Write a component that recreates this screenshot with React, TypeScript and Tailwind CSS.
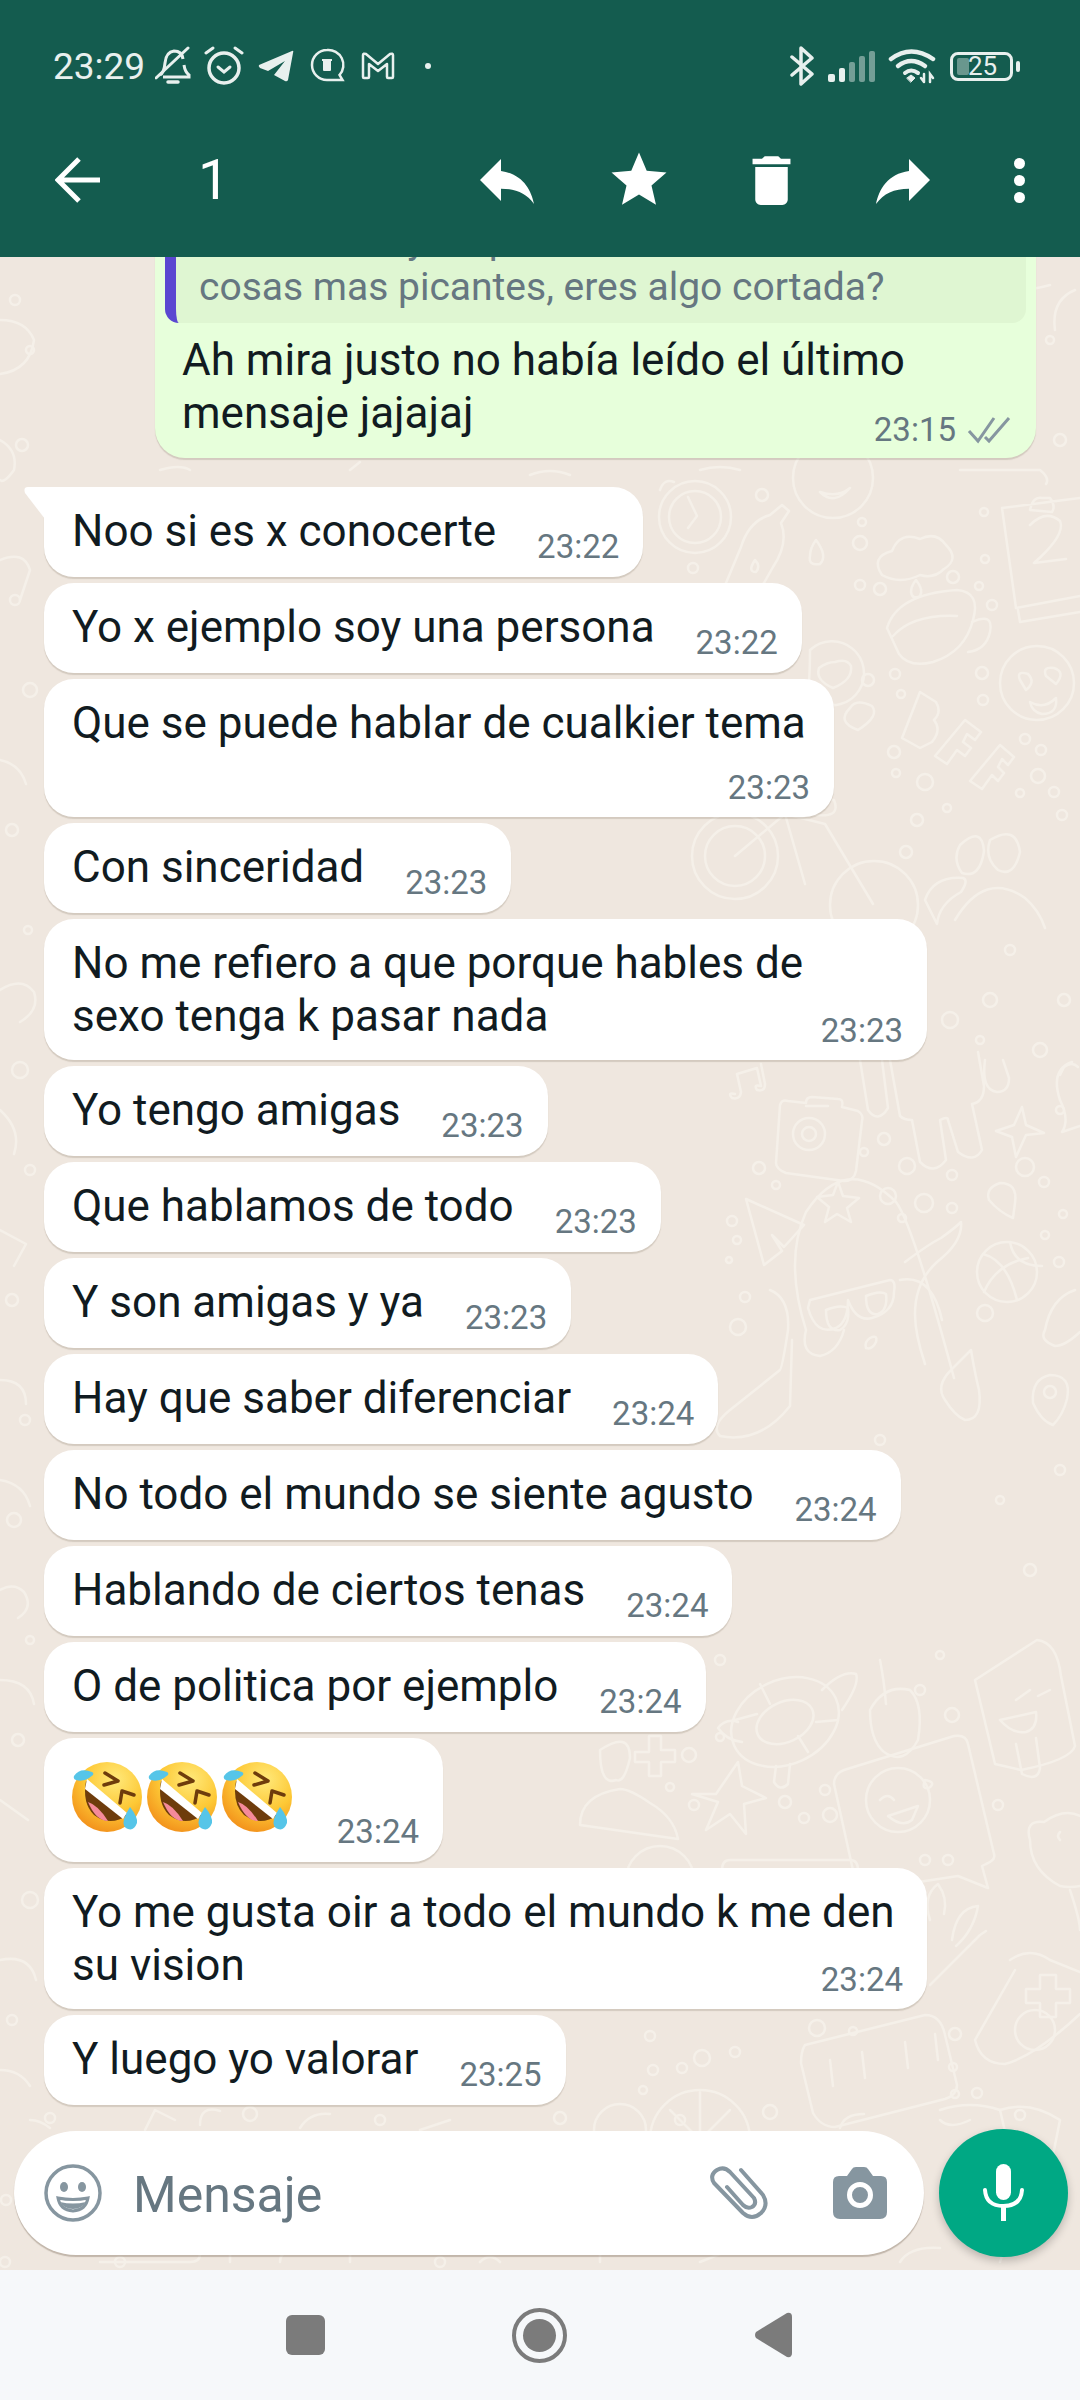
import type { ReactNode } from 'react';

const ink = 'text-[44px] leading-[53px] text-[#111b21]';
const stamp = 'text-[33px] leading-[40px] text-[#667781] whitespace-nowrap';

function Tail() {
  return (
    <svg className="absolute left-[-21px] top-0" width="42" height="32" viewBox="0 0 42 32">
      <path d="M5 0H42V32H22L2 6Q0 0 5 0Z" fill="#fff" />
    </svg>
  );
}

function Bubble({ text, time, tail }: { text: string; time: string; tail?: boolean }) {
  return (
    <div className={`relative self-start shrink-0 flex items-end bg-white pl-[28px] pr-[24px] shadow-[0_2px_1px_rgba(90,70,50,0.18)] rounded-[30px] ${tail ? 'rounded-tl-none' : ''}`}>
      {tail && <Tail />}
      <p className={`${ink} pt-[18px] pb-[19px] whitespace-nowrap`}>{text}</p>
      <span className={`${stamp} ml-[41px] mb-[10px]`}>{time}</span>
    </div>
  );
}

function WideBubble({ text, time, width, timeClass }: { text: ReactNode; time: string; width: string; timeClass: string }) {
  return (
    <div className={`self-start shrink-0 bg-white pl-[28px] pr-[24px] pt-[18px] pb-[9px] shadow-[0_2px_1px_rgba(90,70,50,0.18)] rounded-[30px] ${width}`}>
      <p className={ink}>{text}</p>
      <p className={`${stamp} text-right ${timeClass}`}>{time}</p>
    </div>
  );
}

function Laugh() {
  return (
    <svg width="75" height="76" viewBox="0 0 75 76">
      <defs>
        <radialGradient id="lf" cx="0.62" cy="0.25" r="0.8">
          <stop offset="0" stopColor="#ffe97a" />
          <stop offset="0.55" stopColor="#fdc835" />
          <stop offset="1" stopColor="#f28f1a" />
        </radialGradient>
      </defs>
      <circle cx="35" cy="38" r="35" fill="url(#lf)" />
      <path d="M14 22 L56 56 Q38 68 22 56 Q10 44 14 22Z" fill="#6e3c0c" />
      <path d="M15 20 L55 54 L51 60 L13 30Z" fill="#fff" />
      <path d="M16 43 Q26 46 36 62 Q24 62 16 43Z" fill="#f58a9a" />
      <path d="M33 14 L46 22 L32 26" fill="none" stroke="#6e3c0c" strokeWidth="3.5" strokeLinecap="round" strokeLinejoin="round" />
      <path d="M48 44 L50 32 L62 36" fill="none" stroke="#6e3c0c" strokeWidth="3.5" strokeLinecap="round" strokeLinejoin="round" />
      <path d="M2 17 Q8 8 20 13 Q22 14 21 16 Q12 24 4 21 Q1 20 2 17Z" fill="#56c5e8" />
      <path d="M58 48 Q66 58 65 64 Q62 72 56 70 Q50 68 52 60 Q54 54 58 48Z" fill="#56c5e8" />
    </svg>
  );
}

// doodle dots, in page coordinates
const dots: number[][] = [
  [762, 495, 6], [862, 522, 4], [860, 543, 7], [984, 512, 4], [693, 568, 5], [860, 585, 5], [880, 589, 6], [953, 577, 6], [985, 559, 4], [979, 586, 4], [992, 605, 5],
  [868, 680, 6], [895, 674, 5], [901, 694, 4], [982, 673, 6], [983, 700, 5], [1025, 739, 5], [1041, 750, 5], [894, 752, 6], [896, 773, 4], [925, 782, 8], [1038, 776, 7], [1020, 793, 4], [1054, 792, 5], [947, 808, 4], [917, 820, 6], [906, 852, 6], [1062, 815, 5],
  [759, 1168, 6], [776, 1185, 4], [884, 1139, 6], [864, 1152, 4], [907, 1166, 8], [888, 1196, 8], [924, 1203, 9], [952, 1175, 5], [952, 1208, 5], [902, 1218, 4], [1025, 1167, 9], [1044, 1182, 5], [1063, 1214, 4], [1045, 1235, 4], [1059, 1262, 5], [732, 1221, 5], [737, 1240, 4], [729, 1260, 3], [745, 1297, 5], [738, 1327, 8], [985, 1313, 8],
  [640, 1660, 5], [690, 1660, 6], [720, 1660, 5], [940, 1655, 4], [920, 1690, 5], [952, 1715, 7], [720, 1737, 4], [689, 1755, 7], [670, 1787, 4], [694, 1805, 5], [825, 1790, 5], [785, 1802, 6], [804, 1818, 5], [830, 1815, 7], [998, 1805, 5], [925, 1860, 5], [948, 1860, 5],
  [650, 2036, 5], [653, 2070, 5], [682, 2068, 5], [702, 2058, 8], [735, 2052, 5], [817, 2028, 8], [853, 2031, 4], [955, 2034, 6], [953, 2067, 4], [955, 2094, 4], [977, 2093, 5], [643, 2090, 4], [1020, 2115, 5],
  [15, 300, 5], [30, 350, 4], [22, 445, 6], [15, 600, 5], [30, 690, 7], [12, 830, 6], [28, 930, 4], [20, 1070, 8], [30, 1170, 5], [12, 1300, 6], [25, 1420, 5], [14, 1520, 7], [30, 1640, 4], [18, 1740, 6], [30, 1900, 8], [12, 2020, 5], [50, 2118, 5], [250, 2114, 7], [380, 2120, 5], [560, 2118, 6], [770, 2112, 7], [6, 2200, 5], [5, 2262, 5], [120, 2262, 5], [440, 2262, 5], [680, 2120, 5],
  [1050, 340, 4], [1060, 440, 6], [1064, 1000, 6], [990, 1000, 7], [1010, 950, 5], [980, 1040, 4], [1040, 1050, 7], [1060, 1110, 4], [770, 1020, 5], [950, 1020, 8], [880, 1440, 5], [760, 1470, 7], [1060, 1470, 5], [1000, 1500, 4], [1030, 1570, 6],
];

function Wallpaper() {
  return (
    <svg className="absolute inset-0 w-full h-full" viewBox="0 257 1080 2013" preserveAspectRatio="none">
      <g fill="none" stroke="#f5f0e9" strokeWidth="2.5" strokeLinecap="round" strokeLinejoin="round">
        {dots.map(([x, y, r]) => (
          <circle key={`${x}-${y}`} cx={x} cy={y} r={r} />
        ))}
        {/* clock */}
        <circle cx="695" cy="517" r="36" />
        <circle cx="695" cy="517" r="26" />
        <path d="M688 497L697 516L688 528M660 490q4-12 14-8" />
        {/* smiley top */}
        <circle cx="833" cy="478" r="40" />
        <path d="M820 492q14 14 30-4Q838 498 820 492Z" />
        {/* spray bottle */}
        <path d="M770 515l12-10l7 6l-8 12q8 20-8 44l-34 60q-10 8-28-8l30-72q8-26 29-32ZM755 560q6 6 1 12q-9 0-1-12Z" />
        {/* cloud, drops */}
        <path d="M882 575q-12-18 10-24q8-20 28-12q16-8 26 6q14 14-2 24q-10 10-24 6q-20 10-38 0Z" />
        <path d="M816 540q12 16 4 24q-12 2-10-8q0-8 6-16ZM916 580q8 10 4 16q-8 4-9-4q0-6 5-12Z" />
        {/* 24 calendar */}
        <path d="M1002 508l62-8l16-2M1002 508l14 100l64-12M1030 510q3-14 12-12h8q6 8 2 14ZM1018 610l2 12l60-10" />
        <path d="M1030 525q16-16 30-4q6 14-26 42l32-4" />
        {/* cup */}
        <path d="M887 628q10-34 70-38q24 2 16 30q-8 32-40 42q-24 6-34-8ZM893 636q20-22 64-20M972 622q22-10 18 10q-4 18-22 20" />
        {/* heart smiley */}
        <circle cx="1037" cy="683" r="37" />
        <path d="M1020 680q-4-10 8-6q8 8-2 16ZM1046 676q-4-10 8-8q12 4 2 16ZM1030 702q14 8 26-4q2 16-14 16q-10-2-12-12Z" />
        {/* speech + heart */}
        <path d="M810 650a32 32 0 1 1 8 52l-14 4q6-10 6-56ZM835 662q12-4 16 4q2 14-18 22q-18-8-14-20q8-6 16-6Z" />
        <path d="M850 708q6-10 22-2q8 10-14 24q-22-8-8-22Z" />
        {/* BFF */}
        <path d="M920 692l16 10q6 10-2 18q8 10-2 22l-12 6l-18-10ZM965 720l16 12l-6 8l-8-6l-4 8l8 6l-6 8l-8-6l-10 14l-12-8Z" />
        <path d="M1000 745l14 12l-6 8l-6-6l-4 8l6 6l-6 8l-6-6l-10 14l-12-8Z" />
        {/* bike */}
        <circle cx="735" cy="856" r="43" />
        <circle cx="735" cy="856" r="30" />
        <circle cx="874" cy="905" r="44" />
        <path d="M735 856l50-42l40 10l48 80M790 800h44q8 20-24 14M785 814l20 70" />
        {/* people */}
        <path d="M960 845q22-20 24 6q-4 28-22 22q-10-14-2-28ZM990 840q26-16 30 12q-6 26-22 18q-14-12-8-30ZM925 900q8-24 38-22q6 2-2 14q-22 12-24 32ZM955 920q30-50 70-22q14 12 20 30" />
        {/* music, camera */}
        <path d="M735 1094q-8-2-3 4q8 2 9-6l-4-18l20-6l4 18q-8-2-4 4q8 2 8-6l-4-20" />
        <path d="M780 1105q2-6 8-4l18 2q0-6 6-6l26 2q6 0 4 8l16 4q6 4 4 10l-6 50q-2 10-12 10l-58-8q-10-4-10-10ZM806 1106h22" />
        <circle cx="809" cy="1134" r="16" />
        <circle cx="809" cy="1134" r="7" />
        {/* drips */}
        <path d="M860 1060l8 50q10 14 20-2l-6-48M890 1060l10 56q4 4 12 4l8 42q14 14 26-2l-6-40q8-4 8 0l10 32q16 12 24-2l-10-46q12-2 12-18l-6-34M985 1060q-4 30 12 32q12 0 12-14l-6-18" />
        <path d="M1022 1107l-8 18l-18 6l16 6l4 20l10-22l18-2l-18-8Z" />
        <path d="M1060 1100q-10-30 12-38M1060 1100q10 20 2 32l18-6" />
        {/* star, pin, plane */}
        <path d="M838 1182l5 14l16 2l-12 10l4 14l-14-8l-12 8l4-15l-12-10l16-2Z" />
        <path d="M1000 1183q18 0 15 20l-2 15q-14-6-24-18q-4-12 11-17Z" />
        <path d="M746 1199l58 26l-20 22l-12-12l10 16l-18 14Z" />
        {/* octopus */}
        <path d="M806 1330q-22-70 0-118q40-60 90-10q16 20 58 176M905 1262q24-18 36-24q14-10 20-16q2 20-24 40q-22 20-22 52q0 20 10 50M900 1280q32-6 42 40M806 1330q-6 24 14 26q18-4 24-26M770 1290q20 8 18 40q-6 40-8 40l-50 40q-20 16-10 26q40 8 70-30l2-66" />
        <path d="M810 1300l80-20q6 0 4 12q0 20-22 26q-16 4-24-18q0 22-12 28q-20 8-28-20Z" />
        <path d="M826 1310q14-6 22-2q2 16-8 22q-14 2-14-20ZM866 1296q14-6 20-2q2 16-8 20q-12 2-12-18Z" />
        <path d="M870 1338q8-4 6 4q-4 8-10 6q-2-6 4-10Z" />
        <path d="M945 1400q-10-14 6-30l20-20q4 24 8 40q4 30-14 30q-10-4-20-20Z" />
        {/* ball */}
        <circle cx="1007" cy="1272" r="30" />
        <path d="M983 1254q24 6 34 46M1010 1242q4 24 32 24M984 1292q12-28 44-34" />
        <path d="M1075 1290q-24 8-30 40q-6 10 10 16q10 0 25-14" />
        <path d="M1050 1375q22 0 17 24q-4 16-14 26q-12-4-20-22q-2-24 17-28Z" />
        <circle cx="1050" cy="1392" r="6" />
        <path d="M1060 1075l4-8q8-6 14 0" />
        {/* turtle, apple, popsicle */}
        <ellipse cx="785" cy="1722" rx="56" ry="42" transform="rotate(-25 785 1722)" />
        <ellipse cx="785" cy="1722" rx="30" ry="20" transform="rotate(-25 785 1722)" />
        <path d="M822 1690q20-20 34-16q4 10-14 36M760 1684l10 20M808 1752l-10-16M838 1720l-22 2M735 1720l22-6M742 1742q-16-2-24-14q8-10 20-6M790 1764l-2 20q-8 8-14-2l2-16" />
        <path d="M870 1710q14-26 40-20q14 14 8 50q-14 26-34 12q-14-12-14-42ZM880 1660q4 20 6 44" />
        <path d="M975 1680l62-40q20 2 24 36l14 70q-4 14-54 24l-26-6Z" />
        <path d="M1016 1744l6 30q16 8 18-6l-4-30M1030 1690l-14 10M1050 1690l-12 6M1000 1720l36-8q2 16-10 20q-14 2-26-12Z" />
        {/* star, person */}
        <path d="M738 1762l4 24l24 12l-22 6l2 30l-16-20l-24 16l12-28l-26-8h24Z" />
        <path d="M600 1750q30-20 30 8q-6 26-14 22q-16 6-16-30ZM580 1825q0-30 40-36q10 0 30 14q24 14 28 36Z" />
        <path d="M635 1752h14v-16h12v14h14v12h-14v14h-12v-14h-14Z" />
        {/* wink card */}
        <path d="M844 1770l110-34q12-2 14 8l26 110q2 6-8 10l-4 2l6 22l-30-12l-92 14q-6 0-10-6l-22-100q0-10 10-14Z" />
        <circle cx="898" cy="1800" r="32" />
        <path d="M880 1800q8-8 14 0M888 1816l30-10l-6 14q-10 8-24-4ZM925 1780q-4 10 4 8q8-6-4-8Z" />
        {/* bear, hand, joystick */}
        <path d="M1030 1840q-6-20 14-18q20-14 36-6M1030 1840q0 30 30 46q10 2 20 0M1060 1840q-4-4 0-8M1070 1890q10 30 10 40" />
        <path d="M930 1920q-8-24 8-36q10 14 6 30M952 1940q4-32 26-34q-4 24-22 40M930 1985l50-50l6-4" />
        <path d="M1010 1960q20-14 40 0l30 12M975 2040l40-70M975 2040q6 24 30 24q30-8 75-50" />
        <path d="M1040 1975h16v14h14v14h-14v14h-16v-14h-14v-14h14Z" />
        <circle cx="1035" cy="2030" r="20" />
        {/* digital clock, phone, orange */}
        <path d="M805 2045l120-30q16 0 20 20l12 50q0 10-12 14l-110 28q-14 0-22-14l-12-50q0-12 4-18Z" />
        <path d="M830 2060l3 26M862 2052l3 26M905 2042l3 26M935 2034l3 26" />
        <path d="M730 1860h120q8 0 8 10v10M730 1860q-8 0-8 10v10" />
        <circle cx="660" cy="1880" r="34" />
        <circle cx="700" cy="2140" r="50" />
        <path d="M660 2160l40-20l40 20M700 2140v-48M670 2110l30 30l30-30" />
        <path d="M1000 2110q30-10 60 10l-10 50q-14 10-36 0ZM940 2120q10 10 30 0" />
        <circle cx="620" cy="2130" r="26" />
        {/* composer band */}
        <path d="M30 2120q10 0 20 8M145 2130l10-20l20 10M200 2125q0-20 20-14M300 2128q10-16 30-14M420 2130l30-10M840 2128q4-14 24-14M940 2110q30-10 60 0" />
        <path d="M100 2262h90q10 0 10-8M230 2262v-12M280 2262q0-10 10-10M350 2262v-14M480 2262q10-10 20 0M600 2262v-12M700 2262l20-8M900 2262q10-16 40-14M1000 2262q4-18 30-10" />
        {/* strip beside the first messages */}
        <path d="M0 320q26 0 34 20q-4 30-34 34M0 440q18 10 14 30q-10 14-14 10M0 560q24-10 30 10l-10 30M0 760q20 4 26 24M0 990q22-14 34 2q6 18-14 30M0 1110q22 20 14 44M0 1230l26 14l-12 22M0 1380q26 0 26 24M0 1480q24 4 30 26M0 1590q14-8 24 2q10 16-6 26M0 1680q30 0 34 24M0 1800l28 20M0 1960q30-6 36 20M0 2070q20 0 30 16" />
        <path d="M1075 290q-24 10-20 40M1000 285q14 10 50 0M960 470h80q10 8 6 14M700 285q10-10 30 0M160 470q20-6 30 0M350 470l10-8M530 475q20-8 40 0M700 470q20-6 40 0" />
      </g>
    </svg>
  );
}

function StatusBar() {
  const c = '#e8f0ee';
  return (
    <div className="h-[132px] shrink-0 flex items-center pl-[53px] pr-[60px] text-[#e8f0ee]">
      <span className="text-[37px] leading-none w-[102px]">23:29</span>
      <svg width="36" height="40" viewBox="0 0 36 40" fill="none" stroke={c} strokeWidth="3">
        <path d="M5 29q4-2 5-12q1-11 9-12q8 0 9 8M29 19q1 7 5 10v2H8" />
        <path d="M1 32L33 2" strokeLinecap="round" />
        <path d="M13 36h10" strokeWidth="3.5" strokeLinecap="round" />
      </svg>
      <svg className="ml-[12px]" width="42" height="40" viewBox="0 0 42 40" fill="none" stroke={c} strokeWidth="3.5" strokeLinecap="round">
        <circle cx="21" cy="22" r="15" />
        <path d="M15 21l6 5l6-5" strokeWidth="3" />
        <path d="M3 7l7-5M39 7l-7-5" strokeWidth="3" />
      </svg>
      <svg className="ml-[13px]" width="36" height="32" viewBox="0 0 36 32">
        <path d="M1 15L34 1Q36 0 35 3L30 30Q29 32 27 31L16 25L27 11L10 21L2 18Q0 16 1 15Z" fill={c} />
      </svg>
      <svg className="ml-[16px]" width="36" height="36" viewBox="0 0 36 36">
        <path d="M17 2a15 15 0 1 0 0 30h15.500l-3-5a15 15 0 0 0-12.500-25Z" fill="none" stroke={c} strokeWidth="2.500" />
        <path d="M12 11h10v2h-1v9q0 1-1 1h-6q-1 0-1-1v-9h-1Z" fill={c} />
      </svg>
      <svg className="ml-[15px]" width="34" height="28" viewBox="0 0 34 28" fill="none" stroke={c} strokeWidth="2.5" strokeLinejoin="round">
        <path d="M2 3q0-2 3-1L17 12L29 2q3-1 3 1V25q0 1-1 1h-4q-1 0-1-1V12L17 19L8 12V25q0 1-1 1H3q-1 0-1-1Z" />
      </svg>
      <span className="ml-[30px] w-[6px] h-[6px] rounded-full bg-[#e8f0ee]" />
      <div className="ml-auto flex items-center">
        <svg width="24" height="40" viewBox="0 0 24 40" fill="none" stroke={c} strokeWidth="3.5" strokeLinecap="round" strokeLinejoin="round">
          <path d="M2 11L22 28L11 38V2L22 12L2 29" />
        </svg>
        <svg className="ml-[14px]" width="48" height="32" viewBox="0 0 48 32">
          <rect x="0" y="24" width="7" height="8" rx="2" fill={c} />
          <rect x="11" y="18" width="6" height="14" rx="2" fill={c} />
          <rect x="21" y="12" width="6" height="20" rx="2" fill={c} opacity="0.45" />
          <rect x="31" y="6" width="6" height="26" rx="2" fill={c} opacity="0.45" />
          <rect x="41" y="1" width="6" height="31" rx="2" fill={c} opacity="0.45" />
        </svg>
        <svg className="ml-[12px]" width="48" height="36" viewBox="0 0 48 36" fill="none" stroke={c} strokeWidth="4.5" strokeLinecap="round">
          <path d="M3 11Q23 -4 45 11" />
          <path d="M10 18Q23 8 37 18" />
          <path d="M17 25Q23 20 30 25" strokeWidth="4" />
          <path d="M19 30l4-3l4 3l-4 4Z" fill={c} strokeWidth="1" />
          <path d="M36 26v8M33 30l3 4M42 34v-8l3 4" strokeWidth="2.5" />
        </svg>
        <div className="relative ml-[14px] w-[63px] h-[29px] rounded-[8px] border-[3px] border-[#e8f0ee] flex items-center">
          <div className="absolute left-[4px] top-[3px] bottom-[3px] w-[12px] rounded-[2px] bg-[#e8f0ee]/40" />
          <span className="relative ml-[15px] text-[26px] leading-[23px]">25</span>
        </div>
        <div className="ml-[3px] w-[4px] h-[11px] rounded-[2px] bg-[#e8f0ee]" />
      </div>
    </div>
  );
}

const replyPath = 'M10 9V5l-7 7 7 7v-4.1c5 0 8.5 1.6 11 5.1-1-5-4-10-11-11z';

function Toolbar() {
  const cell = 'w-[132px] flex justify-center';
  return (
    <div className="h-[96px] shrink-0 flex items-center pl-[55px] text-white">
      <svg width="45" height="46" viewBox="0 0 45 46" fill="none" stroke="#fff" strokeWidth="5">
        <path d="M45 23H4M24 2L3 23L24 44" />
      </svg>
      <span className="ml-[98px] text-[56px] leading-none">1</span>
      <div className="ml-auto flex items-center pr-[11px]">
        <div className={cell}>
          <svg width="72" height="72" viewBox="0 0 24 24" fill="#fff"><path d={replyPath} /></svg>
        </div>
        <div className={cell}>
          <svg width="66" height="66" viewBox="0 0 24 24" fill="#fff">
            <path d="M12 17.27L18.18 21l-1.64-7.03L22 9.24l-7.19-.61L12 2 9.19 8.63 2 9.24l5.46 4.73L5.82 21z" />
          </svg>
        </div>
        <div className={cell}>
          <svg width="65" height="65" viewBox="0 0 24 24" fill="#fff">
            <path d="M6 19c0 1.1.9 2 2 2h8c1.1 0 2-.9 2-2V7H6v12zM19 4h-3.5l-1-1h-5l-1 1H5v2h14V4z" />
          </svg>
        </div>
        <div className={cell}>
          <svg width="72" height="72" viewBox="0 0 24 24" fill="#fff" className="-scale-x-100"><path d={replyPath} /></svg>
        </div>
        <div className="w-[100px] flex flex-col items-center gap-[6px]">
          <span className="w-[11px] h-[11px] rounded-full bg-white" />
          <span className="w-[11px] h-[11px] rounded-full bg-white" />
          <span className="w-[11px] h-[11px] rounded-full bg-white" />
        </div>
      </div>
    </div>
  );
}

function SentBubble() {
  return (
    <div className="self-end shrink-0 mr-[44px] mb-[23px] w-[881px] bg-[#e7ffdb] p-[10px] pb-[8px] rounded-[30px] shadow-[0_2px_1px_rgba(90,70,50,0.18)]">
      <div className="bg-[#dff6d2] border-l-[11px] border-[#5b47d1] rounded-[14px] pl-[23px] pb-[12px] text-[39px] leading-[47px] text-[#667781] whitespace-nowrap">
        <p>Me lo dices y no puedes hablar de</p>
        <p>cosas mas picantes, eres algo cortada?</p>
      </div>
      <p className={`${ink} mt-[11px] pl-[17px]`}>
        Ah mira justo no había leído el último
        <br />
        mensaje jajajaj
      </p>
      <div className="-mt-[30px] flex items-center justify-end pr-[15px]">
        <span className={stamp}>23:15</span>
        <svg className="ml-[11px]" width="44" height="28" viewBox="0 0 44 28" fill="none" stroke="#8696a0" strokeWidth="3">
          <path d="M2 15L11 25L27 2M18 21L22 25L42 2" />
        </svg>
      </div>
    </div>
  );
}

function Composer() {
  return (
    <div className="shrink-0 flex items-center pl-[14px] pr-[12px] pb-[13px] gap-[15px]">
      <div className="flex-1 h-[124px] bg-white rounded-[62px] flex items-center pl-[30px] pr-[37px] shadow-[0_2px_1px_rgba(90,70,50,0.3)]">
        <svg width="58" height="58" viewBox="0 0 58 58">
          <circle cx="29" cy="29" r="27" fill="none" stroke="#8696a0" strokeWidth="3.5" />
          <ellipse cx="20" cy="23" rx="4" ry="5" fill="#8696a0" />
          <ellipse cx="38" cy="23" rx="4" ry="5" fill="#8696a0" />
          <path d="M14 34Q29 37 44 34Q42 46 29 47Q16 46 14 34Z" fill="none" stroke="#8696a0" strokeWidth="3" />
          <path d="M16 38Q29 41 42 38Q38 45 29 45Q20 45 16 38Z" fill="#8696a0" />
        </svg>
        <span className="ml-[31px] mt-[4px] text-[50px] leading-none text-[#667781]">Mensaje</span>
        <svg className="ml-auto" width="58" height="54" viewBox="0 0 58 54" fill="none" stroke="#8696a0" strokeWidth="4" strokeLinecap="round" strokeLinejoin="round">
          <path d="M31 4L53 29Q59 39 51 47Q42 55 33 47L4 17Q-1 9 7 4Q14 0 20 6L44 32Q47 38 42 41Q37 43 33 39L17 21" />
        </svg>
        <svg className="ml-[65px]" width="54" height="52" viewBox="0 0 54 52">
          <path fillRule="evenodd" d="M6 9H14L19 2Q20 0 23 0H31Q34 0 35 2L40 9H48Q54 9 54 15V45Q54 52 47 52H7Q0 52 0 45V15Q0 9 6 9ZM27 15A13 13 0 1 0 27 41A13 13 0 1 0 27 15ZM27 20A8 8 0 1 1 27 36A8 8 0 1 1 27 20Z" fill="#8696a0" />
        </svg>
      </div>
      <div className="w-[129px] h-[128px] rounded-full bg-[#00a884] flex items-center justify-center shadow-[0_4px_8px_rgba(0,0,0,0.22)]">
        <svg width="42" height="58" viewBox="0 0 42 58">
          <rect x="13" y="0" width="15" height="36" rx="7.5" fill="#fff" />
          <path d="M2 26Q3 42 20.5 42Q38 42 39 26" fill="none" stroke="#fff" strokeWidth="4" strokeLinecap="round" />
          <path d="M20.5 42V57" stroke="#fff" strokeWidth="5" />
        </svg>
      </div>
    </div>
  );
}

export default function App() {
  return (
    <div className="w-[1080px] h-[2400px] flex flex-col overflow-hidden font-['Roboto',sans-serif]">
      <header className="h-[257px] shrink-0 bg-[#145c4f]">
        <StatusBar />
        <Toolbar />
      </header>

      <section className="relative flex-1 min-h-0 flex flex-col bg-[#efe7df]">
        <Wallpaper />
        <div className="relative flex-1 min-h-0 overflow-hidden flex flex-col justify-end gap-[6px] pl-[44px] pb-[24px]">
          <SentBubble />
          <Bubble tail text="Noo si es x conocerte" time="23:22" />
          <Bubble text="Yo x ejemplo soy una persona" time="23:22" />
          <WideBubble text="Que se puede hablar de cualkier tema" time="23:23" width="w-[790px]" timeClass="mt-[18px]" />
          <Bubble text="Con sinceridad" time="23:23" />
          <WideBubble
            text={<>No me refiero a que porque hables de<br />sexo tenga k pasar nada</>}
            time="23:23"
            width="w-[883px]"
            timeClass="-mt-[32px]"
          />
          <Bubble text="Yo tengo amigas" time="23:23" />
          <Bubble text="Que hablamos de todo" time="23:23" />
          <Bubble text="Y son amigas y ya" time="23:23" />
          <Bubble text="Hay que saber diferenciar" time="23:24" />
          <Bubble text="No todo el mundo se siente agusto" time="23:24" />
          <Bubble text="Hablando de ciertos tenas" time="23:24" />
          <Bubble text="O de politica por ejemplo" time="23:24" />
          <div className="self-start shrink-0 w-[399px] h-[124px] bg-white rounded-[30px] pl-[28px] pr-[24px] flex items-end shadow-[0_2px_1px_rgba(90,70,50,0.18)]">
            <div className="flex mb-[27px]">
              <Laugh />
              <Laugh />
              <Laugh />
            </div>
            <span className={`${stamp} ml-auto mb-[10px]`}>23:24</span>
          </div>
          <WideBubble
            text={<>Yo me gusta oir a todo el mundo k me den<br />su vision</>}
            time="23:24"
            width="w-[883px]"
            timeClass="-mt-[32px]"
          />
          <Bubble text="Y luego yo valorar" time="23:25" />
        </div>
        <div className="relative">
          <Composer />
        </div>
      </section>

      <nav className="h-[130px] shrink-0 bg-[#f6f8fa] flex items-center">
        <div className="ml-[286px] w-[39px] h-[40px] rounded-[6px] bg-[#7b7b7b]" />
        <div className="ml-[187px] w-[55px] h-[55px] rounded-full border-[4px] border-[#7b7b7b] flex items-center justify-center">
          <div className="w-[33px] h-[33px] rounded-full bg-[#7b7b7b]" />
        </div>
        <svg className="ml-[187px]" width="38" height="46" viewBox="0 0 38 46">
          <path d="M33 1Q38 0 38 5V41Q38 46 33 45L2 26Q0 23 2 20Z" fill="#7b7b7b" />
        </svg>
      </nav>
    </div>
  );
}
